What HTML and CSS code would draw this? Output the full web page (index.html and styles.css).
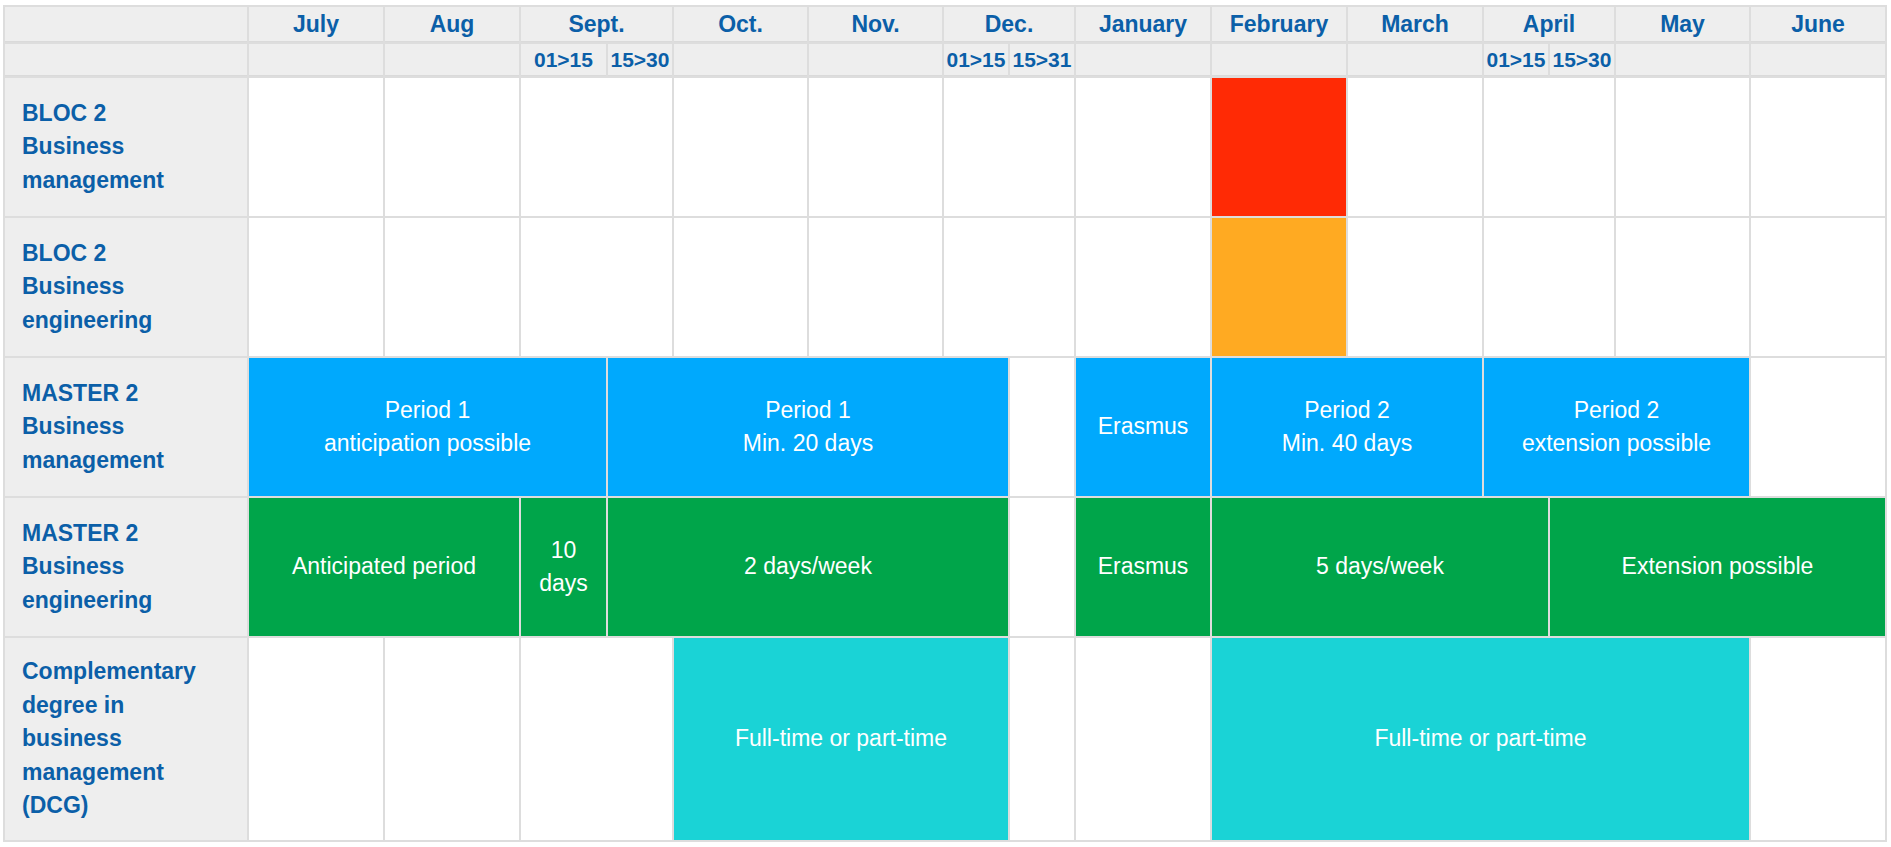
FILE: index.html
```html
<!DOCTYPE html>
<html lang="en">
<head>
<meta charset="utf-8">
<title>Internship calendar</title>
<link rel="stylesheet" href="styles.css">
</head>
<body>
<div class="page">
  <div class="cal">
    <!-- header row 1 -->
    <div class="hd"></div>
    <div class="hd">July</div>
    <div class="hd">Aug</div>
    <div class="hd s2">Sept.</div>
    <div class="hd">Oct.</div>
    <div class="hd">Nov.</div>
    <div class="hd s2">Dec.</div>
    <div class="hd">January</div>
    <div class="hd">February</div>
    <div class="hd">March</div>
    <div class="hd s2">April</div>
    <div class="hd">May</div>
    <div class="hd">June</div>
    <!-- header row 2 -->
    <div class="hd sub"></div>
    <div class="hd sub"></div>
    <div class="hd sub"></div>
    <div class="hd sub">01&gt;15</div>
    <div class="hd sub">15&gt;30</div>
    <div class="hd sub"></div>
    <div class="hd sub"></div>
    <div class="hd sub">01&gt;15</div>
    <div class="hd sub">15&gt;31</div>
    <div class="hd sub"></div>
    <div class="hd sub"></div>
    <div class="hd sub"></div>
    <div class="hd sub">01&gt;15</div>
    <div class="hd sub">15&gt;30</div>
    <div class="hd sub"></div>
    <div class="hd sub"></div>
    <!-- row 1 -->
    <div class="lbl">BLOC 2<br>Business<br>management</div>
    <div class="c"></div>
    <div class="c"></div>
    <div class="c s2"></div>
    <div class="c"></div>
    <div class="c"></div>
    <div class="c s2"></div>
    <div class="c"></div>
    <div class="c red"></div>
    <div class="c"></div>
    <div class="c s2"></div>
    <div class="c"></div>
    <div class="c"></div>
    <!-- row 2 -->
    <div class="lbl">BLOC 2<br>Business<br>engineering</div>
    <div class="c"></div>
    <div class="c"></div>
    <div class="c s2"></div>
    <div class="c"></div>
    <div class="c"></div>
    <div class="c s2"></div>
    <div class="c"></div>
    <div class="c orange"></div>
    <div class="c"></div>
    <div class="c s2"></div>
    <div class="c"></div>
    <div class="c"></div>
    <!-- row 3 -->
    <div class="lbl">MASTER 2<br>Business<br>management</div>
    <div class="c blue s3">Period 1<br>anticipation possible</div>
    <div class="c blue s4">Period 1<br>Min. 20 days</div>
    <div class="c"></div>
    <div class="c blue">Erasmus</div>
    <div class="c blue s2">Period 2<br>Min. 40 days</div>
    <div class="c blue s3">Period 2<br>extension possible</div>
    <div class="c"></div>
    <!-- row 4 -->
    <div class="lbl">MASTER 2<br>Business<br>engineering</div>
    <div class="c green s2">Anticipated period</div>
    <div class="c green">10<br>days</div>
    <div class="c green s4">2 days/week</div>
    <div class="c"></div>
    <div class="c green">Erasmus</div>
    <div class="c green s3">5 days/week</div>
    <div class="c green s3">Extension possible</div>
    <!-- row 5 -->
    <div class="lbl">Complementary<br>degree in<br>business<br>management<br>(DCG)</div>
    <div class="c"></div>
    <div class="c"></div>
    <div class="c s2"></div>
    <div class="c teal s3">Full-time or part-time</div>
    <div class="c"></div>
    <div class="c"></div>
    <div class="c teal s5">Full-time or part-time</div>
    <div class="c"></div>
  </div>
</div>
</body>
</html>
```

FILE: styles.css
```css
html, body {
  margin: 0;
  padding: 0;
  background: #ffffff;
}

.page {
  padding: 5px 3px;
  font-family: "Liberation Sans", Arial, sans-serif;
  font-size: 23px;
  line-height: 33.5px;
}

.cal {
  display: grid;
  width: max-content;
  grid-template-columns: 242px 134px 134px 85px 64px 133px 133px 64px 64px 134px 134px 134px 64px 64px 133px 134px;
  grid-template-rows: 35px 32px 138px 138px 138px 138px 202px;
  gap: 2px;
  padding: 2px;
  background: #dddddd;
}

.s2 { grid-column: span 2; }
.s3 { grid-column: span 3; }
.s4 { grid-column: span 4; }
.s5 { grid-column: span 5; }

.hd {
  background: #eeeeee;
  border-bottom: 1px solid #dadada;
  color: #0b5fa8;
  font-weight: bold;
  display: flex;
  align-items: center;
  justify-content: center;
  text-align: center;
  white-space: nowrap;
  padding-top: 2px;
}

.hd.sub {
  font-size: 21px;
  padding-top: 0;
}

.lbl {
  background: #eeeeee;
  color: #0b5fa8;
  font-weight: bold;
  display: flex;
  align-items: center;
  padding-left: 17px;
}

.c {
  background: #ffffff;
  color: #ffffff;
  display: flex;
  align-items: center;
  justify-content: center;
  text-align: center;
}

.red { background: #ff2a05; }
.orange { background: #ffaa22; }
.blue { background: #00a9fd; }
.green { background: #00a54a; }
.teal { background: #1ad3d6; }
```
